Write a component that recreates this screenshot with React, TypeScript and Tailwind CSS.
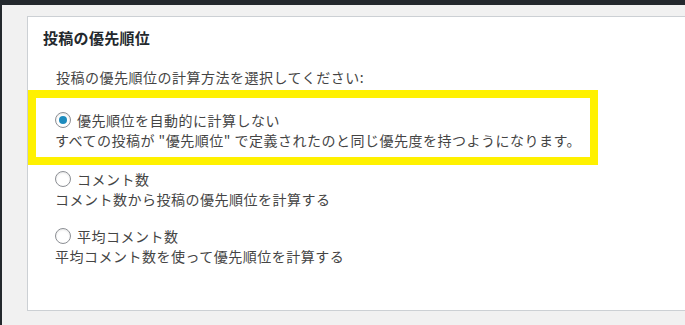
const font = { fontFamily: '"Noto Sans CJK JP", "Noto Sans", sans-serif' }

interface OptionProps {
  label: string
  description: string
  checked?: boolean
}

function Radio({ checked }: { checked?: boolean }) {
  return (
    <span className="flex h-4 w-4 shrink-0 items-center justify-center rounded-full border border-[#8c8f94] bg-white shadow-[inset_0_1px_2px_rgba(0,0,0,0.1)]">
      {checked && <span className="h-2 w-2 rounded-full bg-[#1e8cbe]" />}
    </span>
  )
}

function Option({ label, description, checked }: OptionProps) {
  return (
    <div>
      <label className="flex h-5 items-center gap-[6px]">
        <Radio checked={checked} />
        <span>{label}</span>
      </label>
      <p className="h-5 leading-5">{description}</p>
    </div>
  )
}

export default function App() {
  return (
    <div
      className="h-[325px] w-[685px] overflow-hidden border-l-2 border-t-[5px] border-[#23282d] bg-[#f1f1f1]"
      style={font}
    >
      <div className="ml-[25px] mt-[11px] h-[295px] w-[700px] border border-[#ccd0d4] bg-white text-[14px] leading-5 tracking-[0.5px] text-[#444]">
        <h2 className="pl-[15px] pt-[11px] text-[15px] font-bold leading-5 tracking-[0.3px] text-[#23282d]">
          投稿の優先順位
        </h2>
        <p className="mt-[19px] pl-[28px]">投稿の優先順位の計算方法を選択してください:</p>
        <div className="mt-[3px] h-[75px] w-[570px] border-8 border-[#fff100] pl-[19px] pt-[12px]">
          <Option
            checked
            label="優先順位を自動的に計算しない"
            description={'すべての投稿が "優先順位" で定義されたのと同じ優先度を持つようになります。'}
          />
        </div>
        <div className="mt-[4px] pl-[27px]">
          <Option label="コメント数" description="コメント数から投稿の優先順位を計算する" />
        </div>
        <div className="mt-[17px] pl-[27px]">
          <Option label="平均コメント数" description="平均コメント数を使って優先順位を計算する" />
        </div>
      </div>
    </div>
  )
}
